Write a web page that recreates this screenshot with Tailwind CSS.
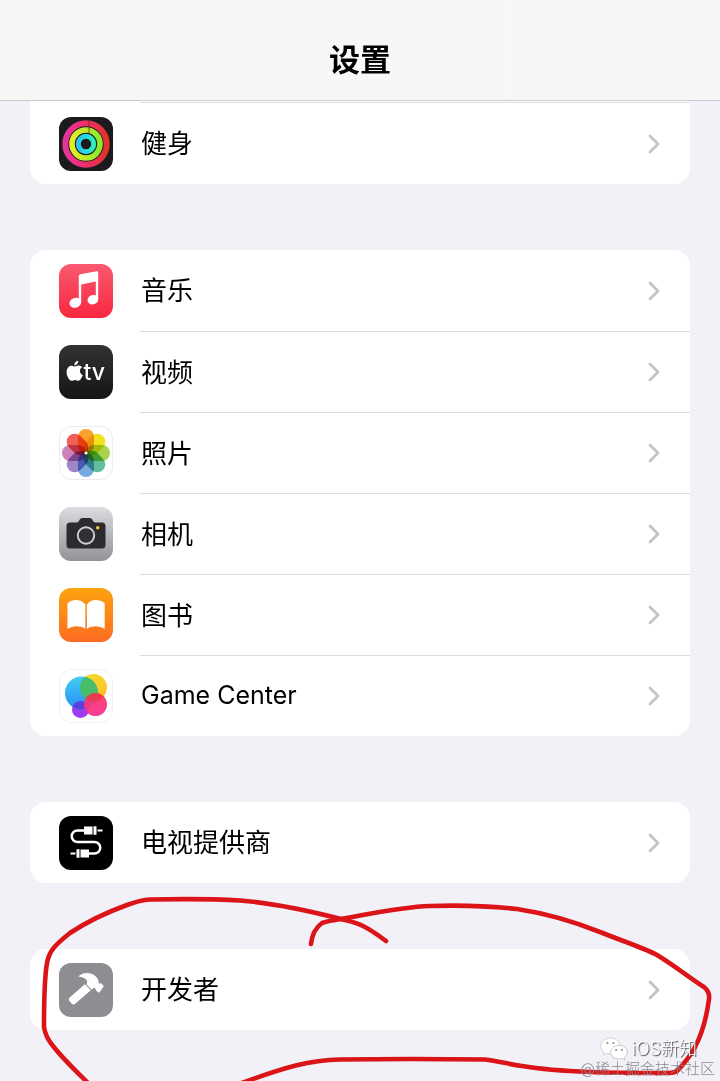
<!DOCTYPE html>
<html lang="zh-CN">
<head>
<meta charset="utf-8">
<meta name="viewport" content="width=device-width, initial-scale=1">
<title>设置</title>
<script src="https://cdn.jsdelivr.net/npm/@tailwindcss/browser@4"></script>
</head>
<body class="bg-[#f2f1f7] font-['Inter','Noto_Sans_CJK_SC',sans-serif] text-[26px] text-black">
<svg class="hidden" aria-hidden="true">
  <symbol id="chevron" viewBox="0 0 12 20"><path d="M2 2l8 8-8 8" fill="none" stroke="#c3c3c6" stroke-width="2.8" stroke-linecap="round" stroke-linejoin="round"/></symbol>
</svg>
<div class="relative min-h-screen overflow-hidden">
  <header class="flex h-[101px] items-end justify-center border-b border-[#cbcbce] bg-gradient-to-r from-[#f9f7f5] via-[#f7f7f7] to-[#f7f7f8] pb-5">
    <h1 class="text-[31px] leading-10 font-bold">设置</h1>
  </header>

  <main class="flex flex-col gap-[66px] px-[30px] pb-[51px]">
    <ul class="rounded-b-2xl bg-white pt-px">
      <li>
        <div class="ml-[110px] h-px bg-[#dcdcdf]"></div>
        <a href="#fitness" class="flex h-[81px] items-center pr-[30px] pl-[29px]">
          <svg class="size-[54px]" viewBox="0 0 54 54" aria-hidden="true">
            <defs>
              <linearGradient id="f1" x1="0" x2="1"><stop stop-color="#e5349b"/><stop offset=".5" stop-color="#ee2f6c"/><stop offset="1" stop-color="#e3312c"/></linearGradient>
              <linearGradient id="f2" x1="0" x2="1"><stop stop-color="#e3ef25"/><stop offset="1" stop-color="#8fe92b"/></linearGradient>
              <linearGradient id="f3" x1="0" x2="1"><stop stop-color="#2ec4ee"/><stop offset="1" stop-color="#2aeec0"/></linearGradient>
            </defs>
            <rect width="54" height="54" rx="12" fill="#1b1b1d"/>
            <g fill="none">
              <circle cx="27" cy="27" r="20.7" stroke="url(#f1)" stroke-width="6"/>
              <circle cx="27" cy="27" r="14" stroke="url(#f2)" stroke-width="5.6"/>
              <circle cx="27" cy="27" r="7.7" stroke="url(#f3)" stroke-width="5"/>
              <path d="M29 3.500c2 1.500 2 4.500 0 6M29 10.500c2 1.500 2 4 0 5.500" stroke="#8c1f28" stroke-opacity=".6" stroke-width="1.500"/>
            </g>
          </svg>
          <span class="ml-7 flex-1">健身</span>
          <svg class="h-5 w-3"><use href="#chevron"/></svg>
        </a>
      </li>
    </ul>

    <ul class="rounded-2xl bg-white">
      <li>
        <a href="#music" class="flex h-[81px] items-center pr-[30px] pl-[29px]">
          <svg class="size-[54px]" viewBox="0 0 54 54" aria-hidden="true">
            <defs><linearGradient id="mu" x2="0" y2="1"><stop stop-color="#f95a70"/><stop offset="1" stop-color="#f9273f"/></linearGradient></defs>
            <rect width="54" height="54" rx="12" fill="url(#mu)"/>
            <path d="M21 19.500L38 15.800V35" fill="none" stroke="#fff" stroke-width="2.400"/>
            <path d="M19.800 12.300q0-1.600 1.600-2L37.600 7.200q1.600-.2 1.600 1.300V16.500L19.800 20.500Z" fill="#fff"/>
            <path d="M21 18v20" stroke="#fff" stroke-width="2.400"/>
            <ellipse cx="16.300" cy="38.800" rx="6" ry="4.900" transform="rotate(-20 16.300 38.800)" fill="#fff"/>
            <ellipse cx="33.900" cy="35.700" rx="5.500" ry="4.700" transform="rotate(-20 33.900 35.700)" fill="#fff"/>
          </svg>
          <span class="ml-7 flex-1">音乐</span>
          <svg class="h-5 w-3"><use href="#chevron"/></svg>
        </a>
      </li>
      <li>
        <a href="#tv" class="flex h-[81px] items-center pl-[29px]">
          <svg class="size-[54px]" viewBox="0 0 54 54" aria-hidden="true">
            <defs><linearGradient id="tv" x2="0" y2="1"><stop stop-color="#333334"/><stop offset="1" stop-color="#151516"/></linearGradient></defs>
            <rect width="54" height="54" rx="12" fill="url(#tv)"/>
            <path d="M15.600 21.600c1.400 0 2.400-1 4.300-1 1.200 0 2.400.6 3.200 1.700-3.200 2-2.600 6.400.7 7.800-.9 2.500-2.500 5.600-4.200 5.600-1.300 0-1.900-.8-3.500-.8-1.700 0-2.300.8-3.500.8-2.300 0-5-4.700-5-8.500 0-4 2.400-6.500 5-6.500 1.500 0 2.300.9 3 .9Z" fill="#fff"/>
            <path d="M15.300 20.200c-.2-2.200 1.600-4.100 3.900-4.500.2 2.400-1.700 4.500-3.900 4.500Z" fill="#fff"/>
            <text x="24.500" y="35" fill="#fff" font-family="Inter, sans-serif" font-size="23" font-weight="500">tv</text>
          </svg>
          <span class="ml-[27px] flex h-full flex-1 items-center justify-between border-t border-[#dcdcdf] pr-[30px] pl-px">视频<svg class="h-5 w-3"><use href="#chevron"/></svg></span>
        </a>
      </li>
      <li>
        <a href="#photos" class="flex h-[81px] items-center pl-[29px]">
          <svg class="size-[54px]" viewBox="0 0 54 54" aria-hidden="true">
            <rect x=".5" y=".5" width="53" height="53" rx="12" fill="#fff" stroke="#ececee"/>
            <g class="mix-blend-multiply">
              <rect class="mix-blend-multiply" x="19" y="3" width="16" height="24" rx="8" fill="#f9a12b"/>
              <rect class="mix-blend-multiply" x="19" y="3" width="16" height="24" rx="8" fill="#f1e21e" transform="rotate(45 27 27)"/>
              <rect class="mix-blend-multiply" x="19" y="3" width="16" height="24" rx="8" fill="#a9d34e" transform="rotate(90 27 27)"/>
              <rect class="mix-blend-multiply" x="19" y="3" width="16" height="24" rx="8" fill="#62bd9b" transform="rotate(135 27 27)"/>
              <rect class="mix-blend-multiply" x="19" y="3" width="16" height="24" rx="8" fill="#76a9e0" transform="rotate(180 27 27)"/>
              <rect class="mix-blend-multiply" x="19" y="3" width="16" height="24" rx="8" fill="#9c86c8" transform="rotate(225 27 27)"/>
              <rect class="mix-blend-multiply" x="19" y="3" width="16" height="24" rx="8" fill="#cd83b8" transform="rotate(270 27 27)"/>
              <rect class="mix-blend-multiply" x="19" y="3" width="16" height="24" rx="8" fill="#f0605a" transform="rotate(315 27 27)"/>
            </g>
            <circle cx="27" cy="27" r="1.500" fill="#fff"/>
          </svg>
          <span class="ml-[27px] flex h-full flex-1 items-center justify-between border-t border-[#dcdcdf] pr-[30px] pl-px">照片<svg class="h-5 w-3"><use href="#chevron"/></svg></span>
        </a>
      </li>
      <li>
        <a href="#camera" class="flex h-[81px] items-center pl-[29px]">
          <svg class="size-[54px]" viewBox="0 0 54 54" aria-hidden="true">
            <defs><linearGradient id="ca" x2="0" y2="1"><stop stop-color="#dcdce0"/><stop offset="1" stop-color="#929297"/></linearGradient></defs>
            <rect width="54" height="54" rx="12" fill="url(#ca)"/>
            <path d="M11 15.500h6.500c1.500 0 2-.7 2.700-2 .8-1.500 1.500-2.500 3.300-2.500h7c1.800 0 2.500 1 3.300 2.500.7 1.300 1.200 2 2.700 2H43q3.500 0 3.500 3.500v19q0 3.500-3.500 3.500H11q-3.500 0-3.500-3.500V19q0-3.500 3.500-3.500Z" fill="#2c2c2e"/>
            <circle cx="27" cy="28.500" r="8.200" fill="#303033" stroke="#d0d0d4" stroke-width="1.900"/>
            <circle cx="38.700" cy="20.700" r="1.700" fill="#f5d031"/>
          </svg>
          <span class="ml-[27px] flex h-full flex-1 items-center justify-between border-t border-[#dcdcdf] pr-[30px] pl-px">相机<svg class="h-5 w-3"><use href="#chevron"/></svg></span>
        </a>
      </li>
      <li>
        <a href="#books" class="flex h-[81px] items-center pl-[29px]">
          <svg class="size-[54px]" viewBox="0 0 54 54" aria-hidden="true">
            <defs><linearGradient id="bo" x2="0" y2="1"><stop stop-color="#fda30e"/><stop offset="1" stop-color="#fb6b22"/></linearGradient></defs>
            <rect width="54" height="54" rx="12" fill="url(#bo)"/>
            <path d="M26.300 16.500C24 13.200 20.500 12 17.500 12c-3.500 0-6.500 1-9 3.300V41c3-2 6-2.800 9-2.800s6 .7 8.800 2.500ZM27.900 16.500c2.300-3.300 5.800-4.500 8.800-4.500 3.500 0 6.500 1 9 3.300V41c-3-2-6-2.800-9-2.800s-6 .7-8.800 2.500Z" fill="#fff"/>
          </svg>
          <span class="ml-[27px] flex h-full flex-1 items-center justify-between border-t border-[#dcdcdf] pr-[30px] pl-px">图书<svg class="h-5 w-3"><use href="#chevron"/></svg></span>
        </a>
      </li>
      <li>
        <a href="#game-center" class="flex h-[81px] items-center pl-[29px]">
          <svg class="size-[54px]" viewBox="0 0 54 54" aria-hidden="true">
            <defs>
              <linearGradient id="g1" x2="0" y2="1"><stop stop-color="#43cdf3"/><stop offset="1" stop-color="#278ef5"/></linearGradient>
              <linearGradient id="g2" x2="0" y2="1"><stop stop-color="#f8d72a"/><stop offset="1" stop-color="#fbb92d"/></linearGradient>
              <linearGradient id="g3" x2="0" y2="1"><stop stop-color="#f63c61"/><stop offset="1" stop-color="#fb2f94"/></linearGradient>
              <clipPath id="gc"><circle cx="22.500" cy="24" r="16.500"/></clipPath>
              <clipPath id="gy"><circle cx="34.500" cy="18.500" r="13.500"/></clipPath>
            </defs>
            <rect x=".5" y=".5" width="53" height="53" rx="12" fill="#fff" stroke="#f1f1f3"/>
            <circle cx="21.500" cy="40.500" r="8.500" fill="#a03cf0"/>
            <circle cx="34.500" cy="18.500" r="13.500" fill="url(#g2)"/>
            <circle cx="22.500" cy="24" r="16.500" fill="url(#g1)"/>
            <circle cx="34.500" cy="18.500" r="13.500" fill="#48bd69" clip-path="url(#gc)"/>
            <circle cx="21.500" cy="40.500" r="8.500" fill="#5b42dc" clip-path="url(#gc)"/>
            <circle cx="36.500" cy="35.500" r="11.500" fill="url(#g3)" fill-opacity=".94"/>
            <circle cx="36.500" cy="35.500" r="11.500" fill="#e9353f" fill-opacity=".6" clip-path="url(#gy)"/>
          </svg>
          <span class="ml-[27px] flex h-full flex-1 items-center justify-between border-t border-[#dcdcdf] pr-[30px] pl-px text-[25px]">Game Center<svg class="h-5 w-3"><use href="#chevron"/></svg></span>
        </a>
      </li>
    </ul>

    <ul class="rounded-2xl bg-white">
      <li>
        <a href="#tv-provider" class="flex h-[81px] items-center pr-[30px] pl-[29px]">
          <svg class="size-[54px]" viewBox="0 0 54 54" aria-hidden="true">
            <rect width="54" height="54" rx="12" fill="#000"/>
            <path d="M25 14.500h-6.500a5.500 5.500 0 0 0 0 11.500h17a5.700 5.700 0 0 1 0 11.500H30" fill="none" stroke="#fff" stroke-width="2.500"/>
            <path d="M25 10.500h8.500v8H25ZM34.500 10.200h3v8.600h-3ZM38.500 13.400H43.500v2.200h-5ZM21.500 33.500H30v8h-8.500ZM17.500 33.200h3v8.600h-3ZM11.500 36.400h5v2.200h-5Z" fill="#fff"/>
          </svg>
          <span class="ml-7 flex-1">电视提供商</span>
          <svg class="h-5 w-3"><use href="#chevron"/></svg>
        </a>
      </li>
    </ul>

    <ul class="rounded-2xl bg-white">
      <li>
        <a href="#developer" class="flex h-[81px] items-center pr-[30px] pl-[29px]">
          <svg class="size-[54px]" viewBox="0 0 54 54" aria-hidden="true">
            <rect width="54" height="54" rx="12" fill="#8e8d92"/>
            <path d="M25.800 21.200l6 6L15.800 41q-1.700 1-3.200-.5l-2.200-2.500q-1.300-1.600 0-3.200Z" fill="#fff"/>
            <path d="M19.200 13.500C24 9 31.500 9 36 12.800c2.800 2.300 3.800 4.500 3.700 7.200 1 .7 1.700.6 2.800.2l2.300 3.300-4.700 6.300-3.400-2.200c.2-1.200-.2-2.200-1-2.800-1.200.3-2.200.8-3.200 1.700l-5-5c1.200-2.500.7-4.200-1-5.600-1.800-1.500-4.500-2.200-7.300-2.400Z" fill="#fff"/>
          </svg>
          <span class="ml-7 flex-1">开发者</span>
          <svg class="h-5 w-3"><use href="#chevron"/></svg>
        </a>
      </li>
    </ul>
  </main>

  <!-- Hand-drawn marker circle around the developer row -->
  <svg class="pointer-events-none absolute bottom-0 left-0 h-[201px] w-full" viewBox="0 880 720 201" aria-hidden="true">
    <g fill="none" stroke="#db1418" stroke-width="4.600" stroke-linecap="round" stroke-linejoin="round">
      <path d="M386 941C378 935 371 930 363 926C355 922 349 921 341 919C310 911 275 903 240 900.500C215 899 175 899 150 899.500C141 900 135 902 127 905C105 913 85 923 70 933C55 945 49 951 47 963C44 980 44 1005 44 1027C45 1034 48 1040 53 1046C64 1060 76 1071 88 1083"/>
      <path d="M311 944C312 935 315 928 322 923C328 921 334 920 341 919C370 914 400 907 430 906C460 905 490 906 517 909C550 914 575 922 600 932C622 941 642 947 657 955C675 966 690 978 704 987Q710 992 709 999C707 1014 702 1034 695 1047C690 1057 684 1063 679 1069Q676 1073 668 1073C645 1073 615 1073 590 1072C565 1071 540 1069 522 1066C508 1064 498 1061 485 1059.500C440 1059 380 1059 340 1059.500C310 1060 285 1067 242 1083"/>
    </g>
  </svg>

  <div class="pointer-events-none absolute right-[5px] bottom-1 flex flex-col items-end">
    <p class="mr-[18px] flex items-center gap-1 text-[18px] leading-4 font-light text-white [text-shadow:1px_1px_1px_#444]">
      <svg class="h-6 w-7" viewBox="0 0 28 24" aria-hidden="true">
        <path d="M10.500 1C5 1 .8 4.600.8 9c0 2.500 1.300 4.600 3.300 6.100L3.300 18l3.200-1.700c1.300.4 2.600.6 4 .6C16 16.900 20 13.300 20 9S16 1 10.500 1Z" fill="#fff" stroke="#c3c2c8" stroke-width=".7"/>
        <path d="M19 8.500c-4.800 0-8.300 3-8.300 6.800S14.200 22 19 22c1 0 2-.2 3-.5l2.900 1.500-.8-2.400c2-1.300 3.200-3.200 3.200-5.300 0-3.800-3.500-6.800-8.300-6.800Z" fill="#fff" stroke="#b6b5bb" stroke-width=".7"/>
        <path d="M6.500 6h1.800M12.500 6h1.800M15.300 13h1.800M21 13h1.800" stroke="#77767c" stroke-width="1.400"/>
      </svg>
      <span>iOS新知</span>
    </p>
    <p class="text-[15px] leading-4 font-light text-[#8b8a90]">@稀土掘金技术社区</p>
  </div>
</div>
</body>
</html>
